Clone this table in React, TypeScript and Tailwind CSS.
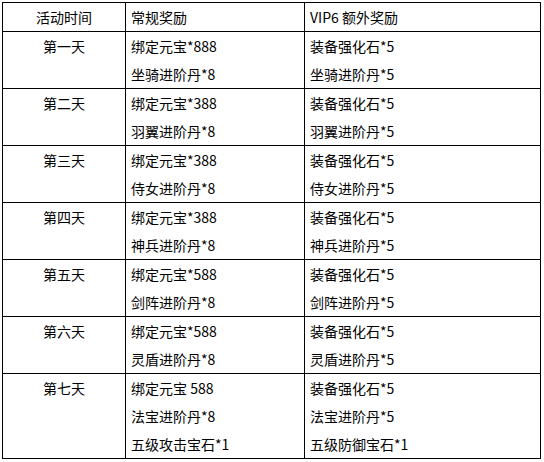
import React from 'react'

// Daily reward rows: day label, regular rewards, VIP6 extra rewards
const rows: Array<{ day: string; normal: string[]; vip: string[] }> = [
  { day: '第一天', normal: ['绑定元宝*888', '坐骑进阶丹*8'], vip: ['装备强化石*5', '坐骑进阶丹*5'] },
  { day: '第二天', normal: ['绑定元宝*388', '羽翼进阶丹*8'], vip: ['装备强化石*5', '羽翼进阶丹*5'] },
  { day: '第三天', normal: ['绑定元宝*388', '侍女进阶丹*8'], vip: ['装备强化石*5', '侍女进阶丹*5'] },
  { day: '第四天', normal: ['绑定元宝*388', '神兵进阶丹*8'], vip: ['装备强化石*5', '神兵进阶丹*5'] },
  { day: '第五天', normal: ['绑定元宝*588', '剑阵进阶丹*8'], vip: ['装备强化石*5', '剑阵进阶丹*5'] },
  { day: '第六天', normal: ['绑定元宝*588', '灵盾进阶丹*8'], vip: ['装备强化石*5', '灵盾进阶丹*5'] },
  {
    day: '第七天',
    normal: ['绑定元宝 588', '法宝进阶丹*8', '五级攻击宝石*1'],
    vip: ['装备强化石*5', '法宝进阶丹*5', '五级防御宝石*1'],
  },
]

const Lines = ({ items }: { items: string[] }) => (
  <>
    {items.map((t, i) => (
      <div key={i} className="h-[28px] leading-[28px] whitespace-nowrap">
        {t}
      </div>
    ))}
  </>
)

export default function App() {
  return (
    <div
      className="w-[544px] h-[462px] bg-white pt-[2px] pl-[2px] text-[14px] text-black"
      style={{ fontFamily: '"Noto Sans CJK SC", "Noto Sans", sans-serif' }}
    >
      <div className="w-[539px] border-l border-t border-black">
        {/* header */}
        <div className="flex">
          <div className="w-[123px] h-[29px] border-r border-b border-black text-center leading-[28px]">活动时间</div>
          <div className="w-[179px] h-[29px] border-r border-b border-black pl-[5px] leading-[28px]">常规奖励</div>
          <div className="w-[236px] h-[29px] border-r border-b border-black pl-[5px] leading-[28px]">VIP6 额外奖励</div>
        </div>
        {rows.map((r) => (
          <div key={r.day} className="flex">
            <div className="w-[123px] border-r border-b border-black text-center">
              <div className="h-[28px] leading-[28px]">{r.day}</div>
            </div>
            <div className="w-[179px] border-r border-b border-black pl-[5px]">
              <Lines items={r.normal} />
            </div>
            <div className="w-[236px] border-r border-b border-black pl-[5px]">
              <Lines items={r.vip} />
            </div>
          </div>
        ))}
      </div>
    </div>
  )
}
